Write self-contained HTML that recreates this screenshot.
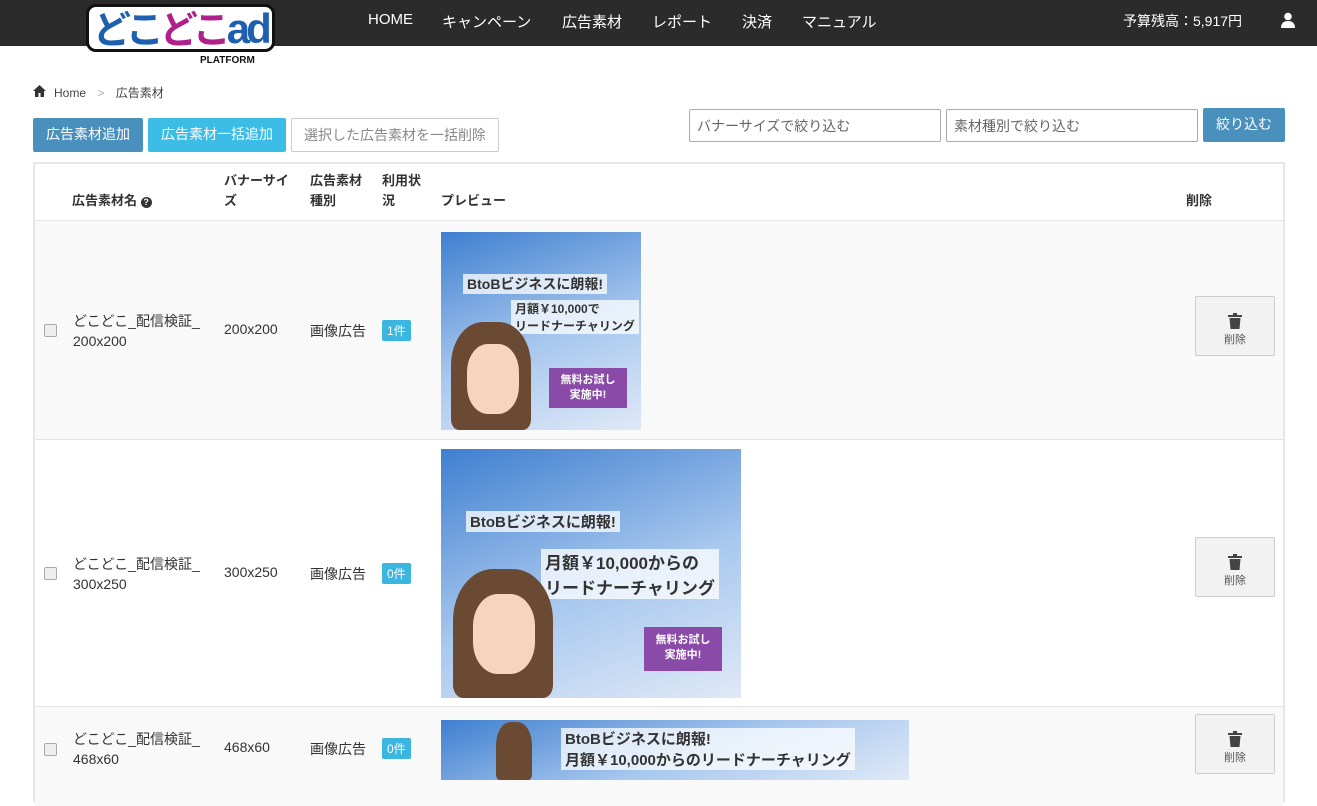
<!DOCTYPE html>
<html><head><meta charset="utf-8"><style>
*{box-sizing:border-box;margin:0;padding:0}
body{width:1317px;height:787px;overflow:hidden;background:#fff;font-family:"Liberation Sans","Noto Sans CJK JP",sans-serif;font-size:14px;color:#333;position:relative}
.nav{position:absolute;left:0;top:0;width:1317px;height:46px;background:#2b2b2b}
.nav a{position:absolute;top:11px;color:#fff;font-size:15px}
.logo{position:absolute;left:86px;top:4px;height:48px;padding:0 4px;background:#fff;border:3px solid #111;border-radius:10px;font-weight:bold;font-size:38px;line-height:40px;letter-spacing:-4px;font-family:"Noto Sans CJK JP","Liberation Sans",sans-serif}
.abs{position:absolute}
.btn{position:absolute;top:118px;height:34px;line-height:32px;font-size:14px;text-align:center;border-radius:2px}
.inp{position:absolute;top:109px;height:33px;border:1px solid #aaa;border-radius:2px;padding:6px 7px;color:#666;font-size:14px}
.tbl{position:absolute;left:33px;top:162px;width:1252px;height:640px;border:2px solid #e6e6e6}
.row{position:absolute;left:0;width:1248px;border-top:1px solid #e4e4e4}
.cb{position:absolute;left:9px;width:13px;height:13px;border:1px solid #aaa;border-radius:2px;background:#eee}
.badge{position:absolute;left:347px;background:#3bb6e0;color:#fff;font-size:12px;padding:2px 5px;border-radius:2px}
.del{position:absolute;left:1160px;width:80px;height:60px;background:#f2f2f2;border:1px solid #ccc;border-radius:2px;text-align:center;font-size:11px;color:#555;padding-top:16px;line-height:14px}
.ban{position:absolute;left:406px;background:linear-gradient(160deg,#3f7fd0,#a8c8ee 55%,#dfe9f7);overflow:hidden}
.ban .t{position:absolute;color:#333;font-weight:bold;background:rgba(255,255,255,.75);padding:0 4px}
.ban .p{position:absolute;background:#8a4aa8;color:#fff;font-weight:bold;text-align:center;font-size:11px;line-height:15px}
.ban .h{position:absolute;background:#6b4a33;border-radius:40% 40% 10% 10%}
.ban .f{position:absolute;background:#f5d5bd;border-radius:40%}
</style></head><body>
<div class="nav">
<a style="left:368px">HOME</a><a style="left:442px">キャンペーン</a><a style="left:562px">広告素材</a><a style="left:652px">レポート</a><a style="left:742px">決済</a><a style="left:802px">マニュアル</a>
<a style="left:1123px;font-size:14px">予算残高：5,917円</a>
<svg class="abs" style="left:1280px;top:12px" width="16" height="16" viewBox="0 0 16 16"><circle cx="8" cy="4.5" r="3.8" fill="#fff"/><path d="M1 16c0-5 3-7 7-7s7 2 7 7z" fill="#fff"/></svg>
</div>
<div class="logo"><span style="color:#1f5fb0">どこ</span><span style="color:#b0208a">どこ</span><span style="color:#1f5fb0;font-family:'Liberation Sans',sans-serif;font-size:42px">ad</span></div>
<div class="abs" style="left:200px;top:55px;font-size:10px;font-weight:bold;color:#111">PLATFORM</div>
<svg class="abs" style="left:33px;top:85px" width="13" height="12" viewBox="0 0 13 12"><path d="M6.5 0L0 6h2v6h3.5V8h2v4H11V6h2z" fill="#333"/></svg>
<div class="abs" style="left:54px;top:84px;font-size:12px;color:#444">Home <span style="color:#aaa;margin:0 8px">&gt;</span> 広告素材</div>
<div class="btn" style="left:33px;width:110px;background:#4a90bd;color:#fff">広告素材追加</div>
<div class="btn" style="left:148px;width:138px;background:#3bbde6;color:#fff">広告素材一括追加</div>
<div class="btn" style="left:291px;width:208px;border:1px solid #ccc;color:#888">選択した広告素材を一括削除</div>
<div class="inp" style="left:689px;width:252px">バナーサイズで絞り込む</div>
<div class="inp" style="left:946px;width:252px">素材種別で絞り込む</div>
<div class="btn" style="left:1203px;top:108px;width:82px;background:#4a90bd;color:#fff">絞り込む</div>
<div class="tbl">
<div class="abs" style="left:0;top:0;width:1248px;height:57px;font-weight:bold;font-size:13px;line-height:20px">
<div class="abs" style="left:37px;top:27px">広告素材名 <span style="display:inline-block;width:11px;height:11px;border-radius:50%;background:#333;color:#fff;font-size:9px;line-height:11px;text-align:center">?</span></div>
<div class="abs" style="left:189px;top:7px">バナーサイ<br>ズ</div>
<div class="abs" style="left:275px;top:7px">広告素材<br>種別</div>
<div class="abs" style="left:347px;top:7px">利用状<br>況</div>
<div class="abs" style="left:406px;top:27px">プレビュー</div>
<div class="abs" style="left:1151px;top:27px">削除</div>
</div>
<div class="row" style="top:56px;height:219px;background:#f9f9f9">
<div class="cb" style="top:103px"></div>
<div class="abs" style="left:38px;top:90px;line-height:20px">どこどこ_配信検証_<br>200x200</div>
<div class="abs" style="left:189px;top:100px">200x200</div>
<div class="abs" style="left:275px;top:100px">画像広告</div>
<div class="badge" style="top:99px">1件</div>
<div class="ban" style="top:11px;width:200px;height:198px"><div class="t" style="left:22px;top:42px;font-size:14px">BtoBビジネスに朗報!</div><div class="t" style="left:70px;top:68px;font-size:12px">月額￥10,000で<br>リードナーチャリング</div><div class="h" style="left:10px;top:90px;width:80px;height:108px"></div><div class="f" style="left:26px;top:112px;width:52px;height:70px"></div><div class="p" style="left:108px;top:136px;width:78px;height:40px;padding-top:5px">無料お試し<br>実施中!</div></div>
<div class="del" style="top:75px"><svg width="14" height="16" viewBox="0 0 14 16"><rect x="0" y="2" width="14" height="2" fill="#444"/><rect x="5" y="0" width="4" height="2" fill="#444"/><path d="M1.5 5h11l-1 11h-9z" fill="#444"/></svg><br>削除</div>
</div>
<div class="row" style="top:275px;height:267px">
<div class="cb" style="top:127px"></div>
<div class="abs" style="left:38px;top:114px;line-height:20px">どこどこ_配信検証_<br>300x250</div>
<div class="abs" style="left:189px;top:124px">300x250</div>
<div class="abs" style="left:275px;top:124px">画像広告</div>
<div class="badge" style="top:123px">0件</div>
<div class="ban" style="top:9px;width:300px;height:249px"><div class="t" style="left:25px;top:62px;font-size:15px">BtoBビジネスに朗報!</div><div class="t" style="left:100px;top:100px;font-size:17px">月額￥10,000からの<br>リードナーチャリング</div><div class="h" style="left:12px;top:120px;width:100px;height:129px"></div><div class="f" style="left:32px;top:145px;width:62px;height:80px"></div><div class="p" style="left:203px;top:178px;width:78px;height:44px;padding-top:6px">無料お試し<br>実施中!</div></div>
<div class="del" style="top:97px"><svg width="14" height="16" viewBox="0 0 14 16"><rect x="0" y="2" width="14" height="2" fill="#444"/><rect x="5" y="0" width="4" height="2" fill="#444"/><path d="M1.5 5h11l-1 11h-9z" fill="#444"/></svg><br>削除</div>
</div>
<div class="row" style="top:542px;height:100px;background:#f9f9f9">
<div class="cb" style="top:36px"></div>
<div class="abs" style="left:38px;top:22px;line-height:20px">どこどこ_配信検証_<br>468x60</div>
<div class="abs" style="left:189px;top:32px">468x60</div>
<div class="abs" style="left:275px;top:32px">画像広告</div>
<div class="badge" style="top:31px">0件</div>
<div class="ban" style="top:13px;width:468px;height:60px"><div class="h" style="left:55px;top:2px;width:36px;height:58px"></div><div class="t" style="left:120px;top:8px;font-size:15px">BtoBビジネスに朗報!<br>月額￥10,000からのリードナーチャリング</div></div>
<div class="del" style="top:7px"><svg width="14" height="16" viewBox="0 0 14 16"><rect x="0" y="2" width="14" height="2" fill="#444"/><rect x="5" y="0" width="4" height="2" fill="#444"/><path d="M1.5 5h11l-1 11h-9z" fill="#444"/></svg><br>削除</div>
</div>
</div>
</body></html>
